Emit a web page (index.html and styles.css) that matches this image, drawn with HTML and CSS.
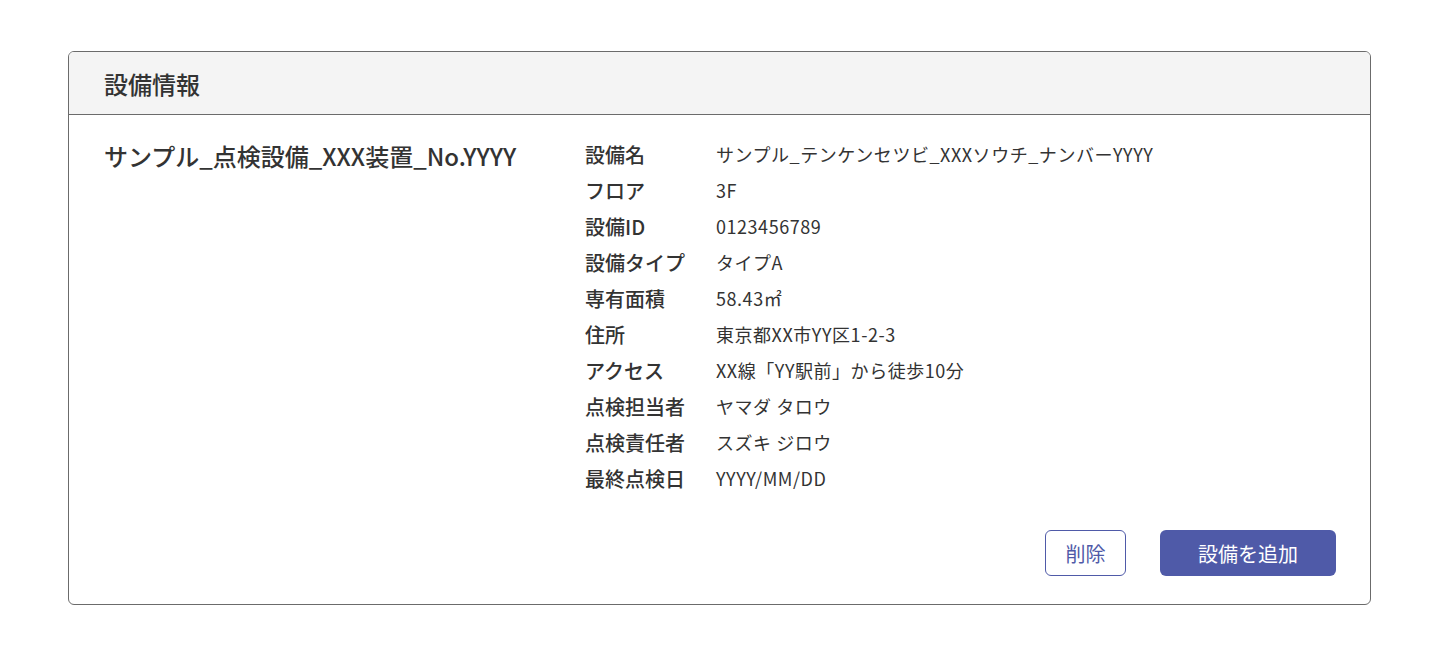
FILE: index.html
```html
<!DOCTYPE html>
<html lang="ja">
<head>
  <meta charset="UTF-8">
  <meta name="viewport" content="width=device-width, initial-scale=1.0">
  <title>設備情報</title>
  <link rel="stylesheet" href="styles.css">
</head>
<body>
  <section class="card">
    <header class="card-header">
      <h1 class="card-title">設備情報</h1>
    </header>

    <div class="card-body">
      <h2 class="equipment-name">サンプル_点検設備_XXX装置_No.YYYY</h2>

      <dl class="detail-list">
        <dt>設備名</dt><dd>サンプル_テンケンセツビ_XXXソウチ_ナンバーYYYY</dd>
        <dt>フロア</dt><dd>3F</dd>
        <dt>設備ID</dt><dd>0123456789</dd>
        <dt>設備タイプ</dt><dd>タイプA</dd>
        <dt>専有面積</dt><dd>58.43㎡</dd>
        <dt>住所</dt><dd>東京都XX市YY区1-2-3</dd>
        <dt>アクセス</dt><dd>XX線「YY駅前」から徒歩10分</dd>
        <dt>点検担当者</dt><dd>ヤマダ タロウ</dd>
        <dt>点検責任者</dt><dd>スズキ ジロウ</dd>
        <dt>最終点検日</dt><dd>YYYY/MM/DD</dd>
      </dl>
    </div>

    <div class="card-actions">
      <button class="btn btn-outline">削除</button>
      <button class="btn btn-primary">設備を追加</button>
    </div>
  </section>
</body>
</html>
```

FILE: styles.css
```css
* {
  margin: 0;
  padding: 0;
  box-sizing: border-box;
}

body {
  padding: 51px 69px 0 68px;
  background: #fff;
  font-family: "Noto Sans CJK JP", "Noto Sans", sans-serif;
  color: #333;
}

.card {
  border: 1px solid #6b6b6b;
  border-radius: 6px;
  overflow: hidden;
}

.card-header {
  height: 63px;
  display: flex;
  align-items: center;
  padding-left: 35px;
  background-color: #f4f4f4;
  border-bottom: 1px solid #6b6b6b;
}

.card-title {
  font-size: 24px;
  font-weight: 500;
}

.card-body {
  display: grid;
  grid-template-columns: 481px 1fr;
  padding: 21px 35px 0;
}

.equipment-name {
  font-size: 24px;
  font-weight: 500;
  line-height: 36px;
  margin-top: 2px;
}

.detail-list {
  display: grid;
  grid-template-columns: 131px 1fr;
  grid-auto-rows: 36px;
  align-items: center;
}

.detail-list dt {
  font-size: 20px;
  font-weight: 500;
}

.detail-list dd {
  font-size: 18px;
  letter-spacing: 0.03em;
}

/* Buttons */
.card-actions {
  display: flex;
  justify-content: flex-end;
  gap: 34px;
  padding: 34px 34px 28px;
}

.btn {
  height: 46px;
  border-radius: 6px;
  font-family: inherit;
  font-size: 20px;
  cursor: pointer;
}

.btn-outline {
  width: 81px;
  background: #fff;
  border: 1px solid #4f5aa8;
  color: #4f5aa8;
}

.btn-primary {
  width: 176px;
  background: #4f5aa8;
  border: none;
  color: #fff;
}
```
